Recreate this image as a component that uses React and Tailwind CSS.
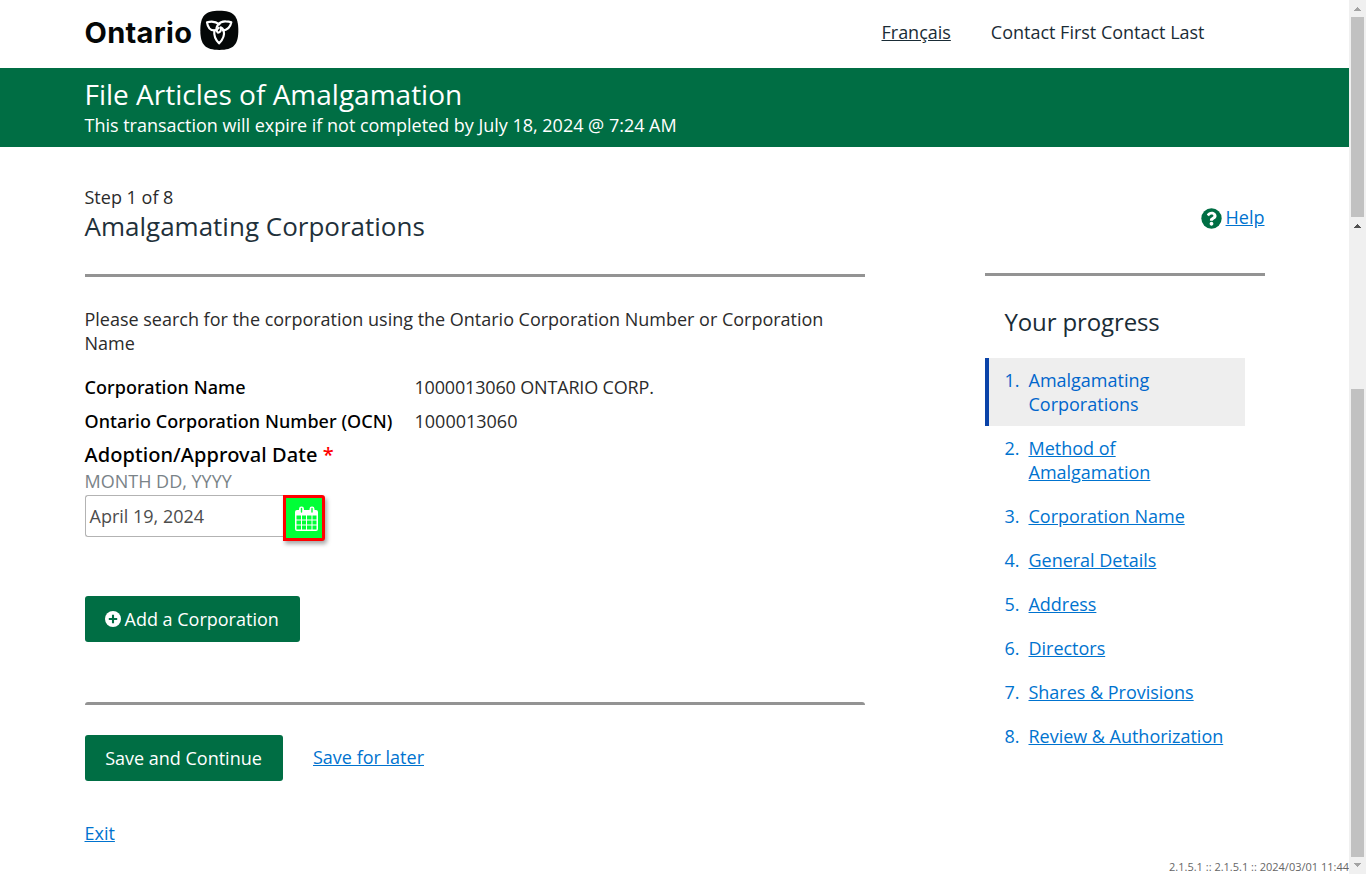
import React from 'react';

const steps = [
  'Amalgamating Corporations',
  'Method of Amalgamation',
  'Corporation Name',
  'General Details',
  'Address',
  'Directors',
  'Shares & Provisions',
  'Review & Authorization',
];

function Trillium() {
  return (
    <svg className="h-10 w-[39px]" viewBox="15 13 117 120" fill="none">
      <path d="M73 15C115 15 130 30 130 74S115 133 73 133S16 118 16 74S31 15 73 15Z" fill="#040707" />
      <g stroke="#fff" strokeWidth="6.5" strokeLinejoin="round" strokeLinecap="round">
        <path d="M73 56C62 47 49 46 36 50C38 64 46 75 60 74C65 73 69 70 71 67" />
        <path d="M66 78C60 64 72 46 92 47C98 47 104 48 109 50C106 64 98 74 83 74" />
        <path d="M58 75C56 92 62 103 72 113C83 103 90 91 86 74C84 70 80 66 77 65C80 74 76 80 69 81" />
      </g>
    </svg>
  );
}

function CalendarIcon() {
  return (
    <svg className="h-[26px] w-6" viewBox="0 0 24 26" fill="none">
      <path fillRule="evenodd" fill="#fff" d="M2 4H21Q23 4 23 6V23Q23 25 21 25H2Q0 25 0 23V6Q0 4 2 4ZM1.500 9.500H6V13.500H1.500ZM7 9.500H11V13.500H7ZM12 9.500H16.500V13.500H12ZM17.500 9.500H21.500V13.500H17.500ZM1.500 14.500H6V18.500H1.500ZM7 14.500H11V18.500H7ZM12 14.500H16.500V18.500H12ZM17.500 14.500H21.500V18.500H17.500ZM1.500 19.500H6V23.500H1.500ZM7 19.500H11V23.500H7ZM12 19.500H16.500V23.500H12ZM17.500 19.500H21.500V23.500H17.500Z" />
      <rect x="4" y="0.5" width="5" height="7" rx="2.400" fill="#fff" />
      <rect x="14.500" y="0.5" width="5" height="7" rx="2.400" fill="#fff" />
      <path d="M6.500 2.500V6M17 2.500V6" stroke="#00ff37" strokeWidth="1.400" strokeLinecap="round" />
    </svg>
  );
}

function Arrow({ className, down }) {
  return (
    <svg className={className} viewBox="0 0 7 4" width="7" height="4" shapeRendering="crispEdges">
      <path fill="currentColor" d={down ? 'M0 0H7V1H6V2H5V3H4V4H3V3H2V2H1V1H0Z' : 'M3 0H4V1H5V2H6V3H7V4H0V3H1V2H2V1H3Z'} />
    </svg>
  );
}

function ScrollBar() {
  return (
    <div className="flex w-[17px] shrink-0 flex-col items-center bg-[#f0f0f0]">
      <Arrow className="mt-[7px] shrink-0 text-[#a3a3a3]" />
      <div className="mt-1.5 h-[200px] w-[13px] shrink-0 bg-[#c1c1c1]" />
      <Arrow className="mt-[7px] shrink-0 text-[#505050]" />
      <div className="mt-[161px] h-[468px] w-[13px] shrink-0 bg-[#c1c1c1]" />
      <Arrow down className="mt-1.5 shrink-0 text-[#a3a3a3]" />
    </div>
  );
}

function Header() {
  return (
    <header className="flex h-[68px] pl-[84.5px]">
      <div className="flex w-[797px] items-start pt-2.5">
        <span className="w-[115.5px] pt-1 font-[Inter,sans-serif] text-[29px] leading-[37px] font-bold tracking-[0.3px] text-[#040707]">Ontario</span>
        <Trillium />
      </div>
      <nav className="flex gap-10 pt-5 tracking-[-0.01px] text-[#1a2c36]">
        <a className="underline">Français</a>
        <span>Contact First Contact Last</span>
      </nav>
    </header>
  );
}

function Sidebar() {
  return (
    <aside className="flex w-[280px] flex-col pt-[58px]">
      <div className="flex h-6 items-center justify-end gap-1 text-[#0073cf]">
        <svg className="mt-[3px] size-[21px]" viewBox="0 0 512 512">
          <circle cx="256" cy="256" r="248" fill="#006e44" />
          <path fill="#fff" d="M262.7 90c-54.5 0-89.300 23-116.500 63.800-3.500 5.300-2.400 12.400 2.700 16.300l34.700 26.300c5.200 3.900 12.600 3 16.700-2.100 17.900-22.700 30.100-35.800 57.300-35.800 20.400 0 45.700 13.100 45.700 33 0 15-12.400 22.700-32.500 34C247.100 238.500 216 254.900 216 296v4c0 6.600 5.400 12 12 12h56c6.600 0 12-5.400 12-12v-1.300c0-28.500 83.200-29.600 83.200-106.700 0-58-60.200-102-116.500-102zM256 338c-25.400 0-46 20.600-46 46s20.600 46 46 46 46-20.600 46-46-20.600-46-46-46z" />
        </svg>
        <a className="underline">Help</a>
      </div>
      <div className="mt-11 h-[3px] bg-[#939393]" />
      <h2 className="mt-[30px] mb-5 pl-5 text-[24px] leading-8 tracking-[-0.12px] text-[#1a2c36]">Your progress</h2>
      <ol className="w-[260px] text-[#0073cf]">
        {steps.map((s, i) => (
          <li
            key={s}
            className={
              i === 0
                ? 'flex border-l-4 border-[#0a43a8] bg-[#eeeeee] py-2.5 pl-4 text-[#0066cc]'
                : 'flex py-2.5 pl-5'
            }
          >
            <span className="w-6 shrink-0">{i + 1}.</span>
            <a className={i === 0 ? 'w-[130px]' : i === 1 ? 'w-[130px] underline' : 'whitespace-nowrap tracking-[-0.02px] underline'}>{s}</a>
          </li>
        ))}
      </ol>
    </aside>
  );
}

function Main() {
  return (
    <main className="flex w-[780px] flex-col items-start pt-[38px]">
      <p>Step 1 of 8</p>
      <h1 className="text-[26px] leading-[34px] text-[#1f313b]">Amalgamating Corporations</h1>
      <div className="mt-[31px] h-[3px] w-full bg-[#939393]" />
      <p className="mt-[30px] w-[770px] tracking-[-0.01px]">
        Please search for the corporation using the Ontario Corporation Number or Corporation Name
      </p>
      <dl className="mt-5 grid grid-cols-[330px_auto] gap-y-2.5">
        <dt className="font-['Noto_Sans',sans-serif] font-medium tracking-[0.06px] text-black">Corporation Name</dt>
        <dd className="tracking-[-0.17px]">1000013060 ONTARIO CORP.</dd>
        <dt className="font-['Noto_Sans',sans-serif] font-medium tracking-[0.06px] text-black">Ontario Corporation Number (OCN)</dt>
        <dd>1000013060</dd>
      </dl>
      <label className="mt-2 font-['Noto_Sans',sans-serif] text-[20px] leading-7 font-medium tracking-[0.08px] text-black">
        Adoption/Approval Date <span className="text-[#f00]">*</span>
      </label>
      <p className="text-[#7a8388]">MONTH DD, YYYY</p>
      <div className="mt-0.5 flex items-start">
        <div className="h-[42px] w-[198px] rounded-l-[3px] border border-r-0 border-[#b3b3b3] pt-2 pl-1 text-[#4d4d4d]">
          April 19, 2024
        </div>
        <button className="flex h-[46px] w-[42px] items-start rounded-r-[3px] border-[3px] border-[#f00] bg-[#00ff37] pt-2 pl-[9.5px] shadow-[2px_3px_4px_rgba(0,0,0,0.35)]">
          <CalendarIcon />
        </button>
      </div>
      <button className="mt-[55px] flex h-[46px] w-[215px] items-center gap-1 rounded-[3px] bg-[#006e44] pl-5 text-white">
        <svg className="size-4" viewBox="0 0 16 16">
          <circle cx="8" cy="8" r="8" fill="#fff" />
          <path d="M8 3.8V12.200M3.800 8H12.200" stroke="#006e44" strokeWidth="2.1" />
        </svg>
        <span>Add a Corporation</span>
      </button>
      <div className="mt-[60px] h-[3px] w-full rounded-t-[3px] bg-[#939393]" />
      <div className="mt-[30px] flex gap-[30.5px]">
        <button className="h-[46px] w-[198px] rounded-[3px] bg-[#006e44] text-white">Save and Continue</button>
        <a className="pt-2.5 text-[#0073cf] underline">Save for later</a>
      </div>
      <a className="mt-[40px] text-[#0073cf] underline">Exit</a>
    </main>
  );
}

export default function App() {
  return (
    <div className="flex h-[874px] w-[1366px] overflow-hidden bg-white font-['Open_Sans',sans-serif] text-[18px] leading-6 text-[#2b2b2b]">
      <div className="flex w-[1349px] flex-col">
        <Header />
        <section className="h-[79px] bg-[#006e44] pt-[7px] pl-[84.5px] text-white">
          <h1 className="text-[28px] leading-[38px]">File Articles of Amalgamation</h1>
          <p className="tracking-[-0.015px]">This transaction will expire if not completed by July 18, 2024 @ 7:24 AM</p>
        </section>
        <div className="flex h-[712px] justify-between px-[84.5px]">
          <Main />
          <Sidebar />
        </div>
        <footer className="text-right text-[11px] leading-[15px] text-[#666]">2.1.5.1 :: 2.1.5.1 :: 2024/03/01 11:44</footer>
      </div>
      <ScrollBar />
    </div>
  );
}
